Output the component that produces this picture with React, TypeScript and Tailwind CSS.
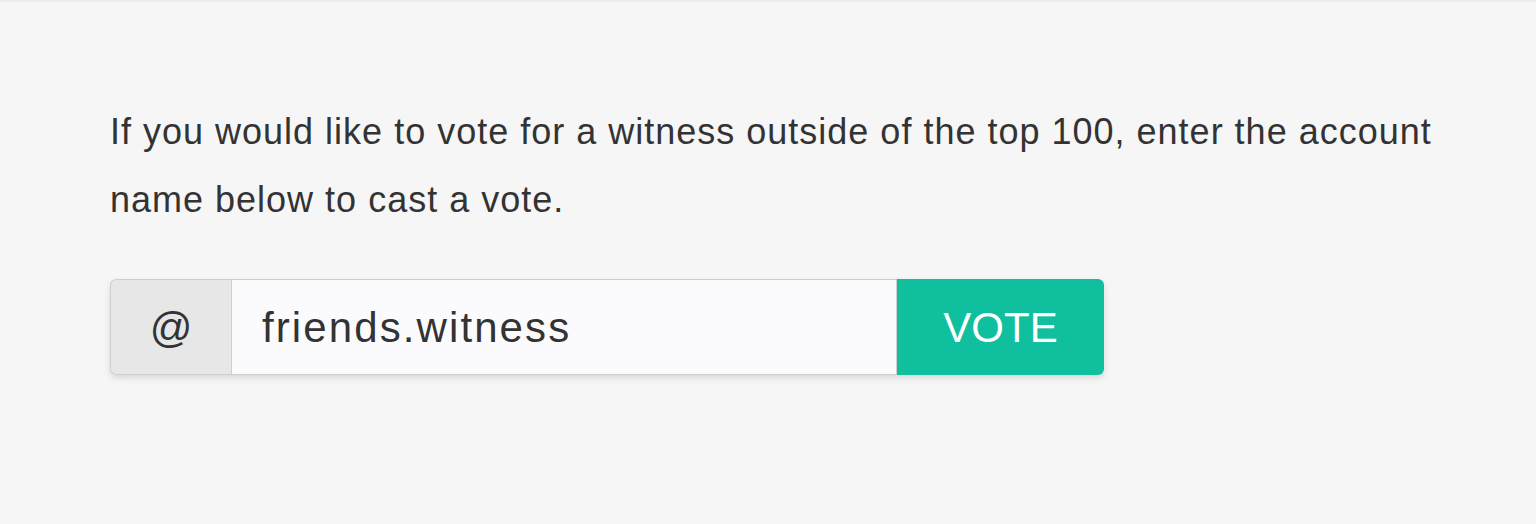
import { useState } from 'react';

export default function App() {
  const [account, setAccount] = useState('friends.witness');

  return (
    <div className="min-h-[524px] w-full bg-[#f6f6f7] font-['Liberation_Sans',Arial,sans-serif] text-[#333333]">
      <div className="h-[2px] bg-[#ececee]" />
      <div className="pl-[110px] pr-[40px] pt-[96px]">
        <p className="max-w-[1360px] text-[36px] leading-[68px] tracking-[1px]">
          If you would like to vote for a witness outside of the top 100, enter the account name below to cast a vote.
        </p>
        <form
          onSubmit={e => e.preventDefault()}
          className="mt-[45px] flex h-[96px] w-[994px] rounded-md shadow-[0_3px_6px_rgba(0,0,0,0.12)]"
        >
          <span className="flex w-[121px] items-center justify-center rounded-l-md border border-r-0 border-[#cfcfd1] bg-[#e7e7e8] text-[42px] text-[#333]">
            @
          </span>
          <input
            type="text"
            value={account}
            onChange={e => setAccount(e.target.value)}
            className="w-[666px] border border-[#cfcfd1] bg-[#fbfbfd] px-[30px] text-[42px] tracking-[2.1px] text-[#333] focus:outline-none"
          />
          <button
            type="submit"
            className="flex-1 rounded-r-md bg-[#10bf9e] text-[42px] text-white"
          >
            VOTE
          </button>
        </form>
      </div>
    </div>
  );
}
